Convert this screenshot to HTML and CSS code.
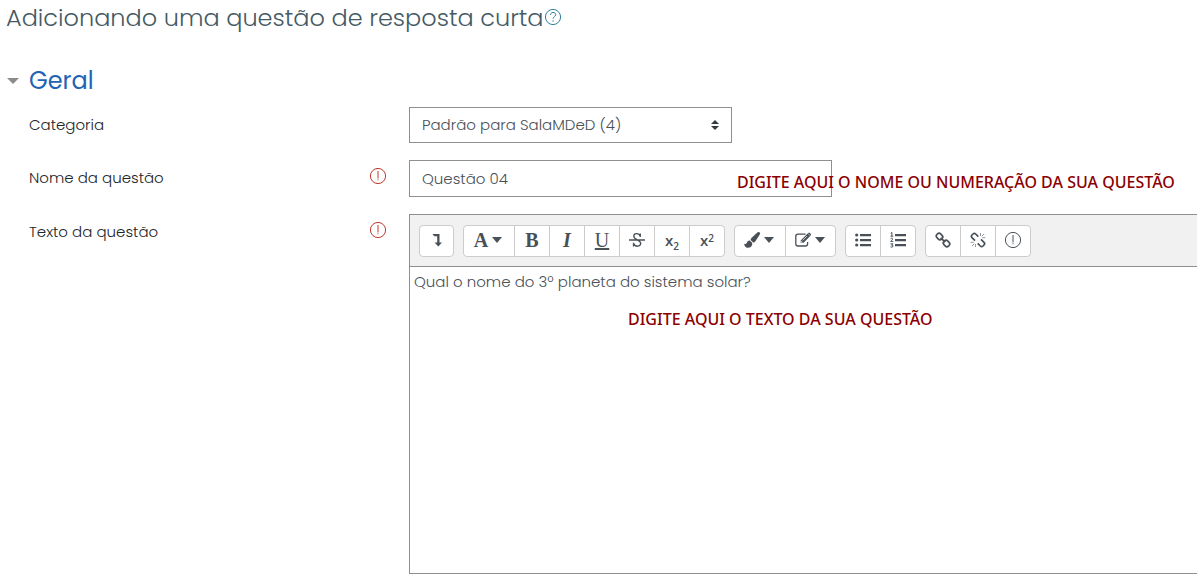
FILE: index.html
```html
<!DOCTYPE html>
<html lang="pt-BR">
<head>
    <meta charset="UTF-8">
    <meta name="viewport" content="width=device-width, initial-scale=1.0">
    <title>Adicionando uma questão de resposta curta</title>
    <link rel="stylesheet" href="styles.css">
</head>
<body>
    <h2 class="page-title">
        Adicionando uma questão de resposta curta<a href="#" class="help-link" aria-label="Ajuda"><svg class="icon-circle" viewBox="0 0 18 18"><circle cx="9" cy="9" r="7.6"/><path d="M6.5 7c0-3.500 5.200-3.300 5.200-.3 0 2-2.600 2.100-2.600 4M9.100 12.300v1.400"/></svg></a>
    </h2>

    <form class="question-form">
        <h3 class="section-title">
            <a href="#">
                <svg class="toggle-icon" viewBox="0 0 12 6"><path d="M0 0h12L6 6z"/></svg>
                Geral
            </a>
        </h3>

        <div class="form-row">
            <div class="form-label">
                <label for="category">Categoria</label>
            </div>
            <div class="select-wrap">
                <select id="category" class="form-control">
                    <option>Padrão para SalaMDeD (4)</option>
                </select>
                <svg class="select-arrows" viewBox="0 0 8 10"><path d="M0 4h8L4 0zM0 6h8l-4 4z"/></svg>
            </div>
        </div>

        <div class="form-row">
            <div class="form-label">
                <label for="name">Nome da questão</label>
                <svg class="icon-circle required" viewBox="0 0 18 18"><circle cx="9" cy="9" r="7.6"/><path d="M9 4v7.500M9 12.300v1"/></svg>
            </div>
            <div class="field">
                <input type="text" id="name" class="form-control name-input" value="Questão 04">
                <span class="hint hint-name">DIGITE AQUI O NOME OU NUMERAÇÃO DA SUA QUESTÃO</span>
            </div>
        </div>

        <div class="form-row">
            <div class="form-label">
                <label for="text">Texto da questão</label>
                <svg class="icon-circle required" viewBox="0 0 18 18"><circle cx="9" cy="9" r="7.6"/><path d="M9 4v7.500M9 12.300v1"/></svg>
            </div>
            <div class="editor">
                <div class="toolbar">
                    <div class="btn-group">
                        <button type="button" class="single" aria-label="Mostrar mais botões">
                            <svg class="icon" viewBox="0 0 16 16"><path d="M3.500 2h7v8.500H13L9.300 14.500 5.600 10.500H8.200V4.200H5.300z"/></svg>
                        </button>
                    </div>
                    <div class="btn-group">
                        <button type="button" class="wide" aria-label="Estilos de parágrafo">
                            <span class="letter">A</span>
                            <svg class="caret" viewBox="0 0 10 6"><path d="M0 0h10L5 6z"/></svg>
                        </button>
                        <button type="button" class="letter" aria-label="Negrito">B</button>
                        <button type="button" class="letter" aria-label="Itálico"><i>I</i></button>
                        <button type="button" class="letter light" aria-label="Sublinhado"><u>U</u></button>
                        <button type="button" class="letter light" aria-label="Riscado">
                            <svg class="icon" viewBox="0 0 16 16"><path class="line" d="M11.300 5V1.600M11.300 4.500C10 .500 4.800.900 4.800 4.200c0 4 6.900 3.200 6.900 7.100 0 3.700-6 4.100-7.200 0M4.500 10.800v3.600M0 8h16"/></svg>
                        </button>
                        <button type="button" class="script" aria-label="Subscrito">x<sub>2</sub></button>
                        <button type="button" class="script" aria-label="Sobrescrito">x<sup>2</sup></button>
                    </div>
                    <div class="btn-group">
                        <button type="button" class="wide" aria-label="Cor do texto">
                            <svg class="icon" viewBox="0 0 16 16"><path d="M15.600.400c.7.700.4 1.600 0 2.300l-4.200 6.500c-.6.900-1.400 1.300-2.200 1.200L6.600 7.900c0-.9.400-1.500 1.100-2.200L13.300.6c.7-.6 1.600-.8 2.300-.2zM5.800 8.600l2.500 2.400c.2 3-1.800 4.700-4.500 4.700C1.500 15.700.3 13.700.2 11.400c1 .7 1.900 1 2.500-.4.6-1.600 1.600-2.500 3.100-2.400z"/></svg>
                            <svg class="caret" viewBox="0 0 10 6"><path d="M0 0h10L5 6z"/></svg>
                        </button>
                        <button type="button" class="wide" aria-label="Cor de fundo">
                            <svg class="icon" viewBox="0 0 16 16"><path class="line" d="M10.500 2.200H3Q.8 2.200.8 4.400v7.400Q.8 14 3 14h7.400q2.200 0 2.200-2.200V10"/><path d="M12.600 1.500l2.600 2.600-6.900 6.900H5.700V8.400zM13.200.900q.8-.8 1.600 0l1 1q.8.800 0 1.600l-.300.300-2.600-2.600z"/><path class="cut" d="M7.500 8.500l4.500-4.500M6.300 9v1.400h1.400"/></svg>
                            <svg class="caret" viewBox="0 0 10 6"><path d="M0 0h10L5 6z"/></svg>
                        </button>
                    </div>
                    <div class="btn-group">
                        <button type="button" aria-label="Lista não ordenada">
                            <svg class="icon" viewBox="0 0 16 16"><circle cx="1.700" cy="3" r="1.600"/><circle cx="1.700" cy="8" r="1.600"/><circle cx="1.700" cy="13" r="1.600"/><path d="M5 2h11v2.200H5zM5 7h11v2.200H5zM5 12h11v2.200H5z"/></svg>
                        </button>
                        <button type="button" aria-label="Lista ordenada">
                            <svg class="icon" viewBox="0 0 16 16"><path class="thin" d="M.7 1.300l1.200-.8v3.700M.5 4.200h2.800M.6 6.800q.8-.8 1.700-.4c1.200.8-.7 1.800-1.700 3h2.700M.5 11.800h2.400l-1.300 1.400q1.800 0 1.400 1.300-.8 1.200-2.500.3"/><path d="M5 2h11v2.200H5zM5 7h11v2.200H5zM5 12h11v2.200H5z"/></svg>
                        </button>
                    </div>
                    <div class="btn-group">
                        <button type="button" aria-label="Link">
                            <svg class="icon" viewBox="0 0 16 16"><g class="chain"><rect x="1.300" y="1.900" width="6.400" height="5.200" rx="2.200" transform="rotate(45 4.500 4.500)"/><rect x="8.300" y="8.900" width="6.400" height="5.200" rx="2.200" transform="rotate(45 11.500 11.500)"/><path d="M5.800 5.800l4.400 4.400"/></g></svg>
                        </button>
                        <button type="button" aria-label="Remover link">
                            <svg class="icon" viewBox="0 0 16 16"><g class="chain"><path d="M5 8.700L2 5.700Q.700 4.300 2 3l1-1Q4.300.700 5.700 2l2.600 2.600M11 7.300l3 3q1.300 1.400 0 2.700l-1 1q-1.300 1.300-2.700 0l-2.600-2.600"/></g><path class="fine" d="M10.500 4V1M11.700 4.300l2.300-2.300M12.300 5.700h3M5.500 12v3M4.300 11.700L2 14M3.700 10.300h-3"/></svg>
                        </button>
                        <button type="button" aria-label="Inserir ícone">
                            <svg class="icon-circle" viewBox="0 0 18 18"><circle cx="9" cy="9" r="7.6"/><path d="M9 4v7.500M9 12.300v1"/></svg>
                        </button>
                    </div>
                </div>
                <textarea id="text" class="editor-text">Qual o nome do 3º planeta do sistema solar?</textarea>
                <span class="hint hint-text">DIGITE AQUI O TEXTO DA SUA QUESTÃO</span>
            </div>
        </div>
    </form>
</body>
</html>
```
FILE: styles.css
```css
* {
    box-sizing: border-box;
}

body {
    margin: 0;
    background: #fff;
    color: #212529;
    font-family: Poppins, Inter, sans-serif;
    font-size: 15px;
    line-height: 22px;
    overflow-x: hidden;
}

.page-title {
    margin: 0;
    padding: 2px 6px;
    color: #455a64;
    font-size: 24px;
    font-weight: 300;
    line-height: 32px;
}

.help-link {
    color: #2f7f9b;
    text-decoration: none;
}

.icon-circle {
    width: 18px;
    height: 18px;
    fill: none;
    stroke: currentColor;
    stroke-width: 1;
}

.question-form {
    padding: 29px 0 11px 29px;
    display: flex;
    flex-direction: column;
    gap: 17px;
}

.section-title {
    margin: 0 0 -7px -22px;
    font-size: 24px;
    font-weight: 400;
    line-height: 32px;
}

.section-title a {
    display: flex;
    align-items: center;
    gap: 10px;
    color: #1f65b3;
    text-decoration: none;
}

.toggle-icon {
    width: 12px;
    height: 6px;
    fill: #8b8b8b;
}

.form-row {
    display: grid;
    grid-template-columns: 380px 1fr;
}

.form-label {
    display: flex;
    justify-content: space-between;
    align-items: flex-start;
    padding: 7px 22px 0 0;
    font-weight: 300;
}

.required {
    color: #c0392b;
}

.form-control {
    width: 100%;
    height: 36px;
    padding: 0 12px;
    border: 1px solid #8f8f8f;
    border-radius: 0;
    background: #fff;
    color: #495057;
    font: inherit;
    font-weight: 300;
    appearance: none;
}

.select-wrap {
    position: relative;
    width: 323px;
}

.select-wrap .form-control {
    display: block;
}

.select-arrows {
    position: absolute;
    right: 13px;
    top: 13px;
    width: 8px;
    height: 10px;
    fill: #343a40;
    pointer-events: none;
}

.field {
    position: relative;
}

.name-input {
    display: block;
    max-width: 423px;
    height: 37px;
}

/* anotações em vermelho sobre os campos */
.hint {
    position: absolute;
    color: #8b0000;
    font-family: "Noto Sans", "Open Sans", sans-serif;
    font-size: 16px;
    font-weight: 500;
    line-height: 22px;
    white-space: nowrap;
    pointer-events: none;
}

.hint-name {
    left: 328px;
    top: 11px;
}

.hint-text {
    left: 218px;
    top: 93px;
}

.editor {
    position: relative;
    min-width: 0;
    border: 1px solid #8f8f8f;
    border-right: none;
}

.toolbar {
    display: flex;
    flex-wrap: wrap;
    gap: 9px;
    padding: 10px 9px 9px;
    background: #f1f1f1;
    border-bottom: 1px solid #8f8f8f;
}

.btn-group {
    display: flex;
    border: 1px solid #ccc;
    border-radius: 4px;
    background: #fff;
    overflow: hidden;
}

.btn-group button {
    display: flex;
    align-items: center;
    justify-content: center;
    width: 34px;
    height: 30px;
    padding: 0 0 2px;
    border: none;
    background: none;
    color: #495057;
}

.btn-group button + button {
    width: 35px;
    border-left: 1px solid #ccc;
}

.btn-group .single {
    width: 33px;
}

.btn-group .wide,
.btn-group button + .wide {
    width: 50px;
    gap: 4px;
    padding-right: 2px;
}

.btn-group .letter {
    font-family: "Liberation Serif", serif;
    font-size: 20px;
    font-weight: 700;
}

.btn-group .light {
    font-weight: 400;
}

.btn-group .script {
    font-family: "Open Sans", sans-serif;
    font-size: 15px;
    font-weight: 600;
}

.script sub,
.script sup {
    font-size: 10px;
    line-height: 1;
}

.script sub {
    align-self: flex-end;
    padding-bottom: 3px;
}

.script sup {
    align-self: flex-start;
    padding-top: 7px;
}

.icon {
    width: 16px;
    height: 16px;
    fill: currentColor;
}

.icon .line,
.icon .thin,
.icon .fine,
.icon .chain {
    fill: none;
    stroke: currentColor;
}

.icon .line {
    stroke-width: 1.3;
}

.icon .fine {
    stroke-width: 0.6;
}

.icon .chain {
    stroke-width: 1.7;
}

.icon .cut {
    fill: none;
    stroke: #fff;
    stroke-width: 0.7;
}

.caret {
    width: 10px;
    height: 6px;
    fill: currentColor;
}

.editor-text {
    display: block;
    width: 100%;
    height: 306px;
    padding: 4px;
    border: none;
    outline: none;
    resize: none;
    color: #495057;
    font: inherit;
    font-weight: 300;
}
```
